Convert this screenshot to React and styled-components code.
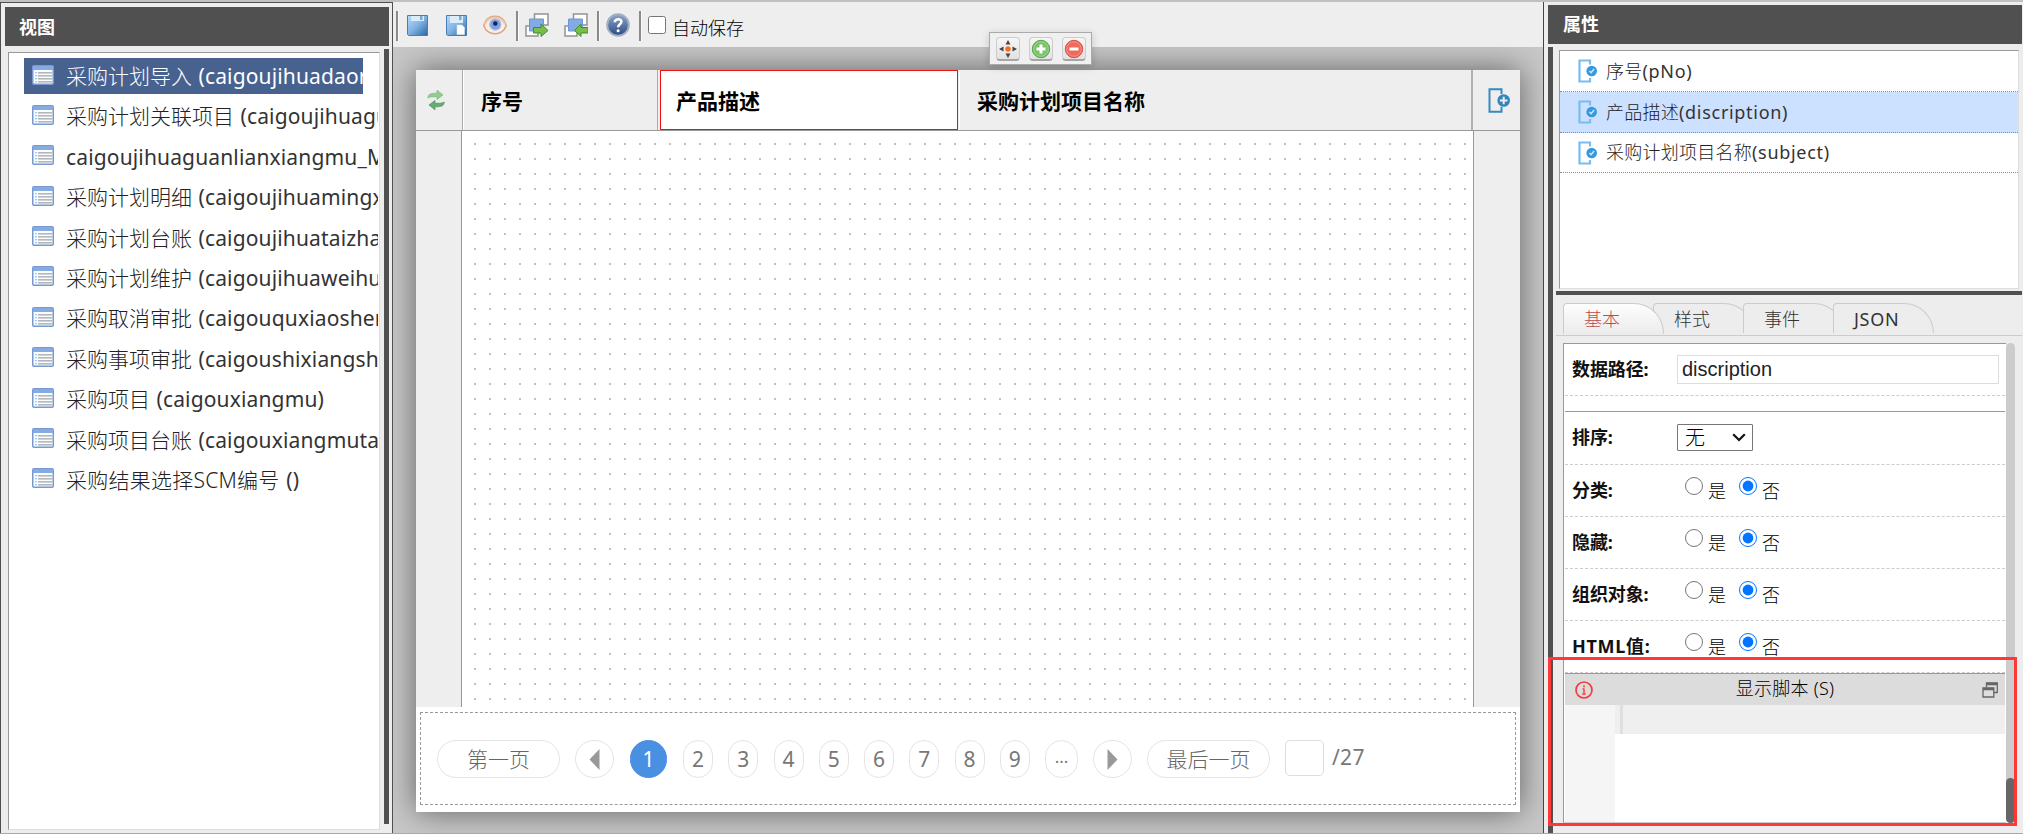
import React from "react";
import styled, { createGlobalStyle } from "styled-components";

const ui = `"Noto Sans", "Noto Sans CJK SC", sans-serif`;

const Global = createGlobalStyle`
  * { box-sizing: border-box; }
  body { margin: 0; overflow: hidden; font-family: ${ui}; background: #ededed; }
  svg { display: block; flex: none; }
`;

const Window = styled.div`
  position: relative;
  width: 2023px;
  height: 834px;
  display: flex;
  border-top: 2px solid #c0c0c0;
  border-bottom: 1px solid #a9a9a9;
  background: #ededed;
  overflow: hidden;
`;

/* ---------- left panel ---------- */
const ViewsPanel = styled.aside`
  width: 393px;
  flex: none;
  border: 1px solid #505050;
  border-bottom: 0;
  padding: 4px 3px 3px 4px;
  display: flex;
  flex-direction: column;
`;
const PanelTitle = styled.header`
  height: 39px;
  flex: none;
  padding-left: ${(p) => p.$inset}px;
  background: #505050;
  color: #fff;
  font: 700 18px/${(p) => p.$line}px ${ui};
`;
const ViewsBody = styled.div`
  flex: 1;
  min-height: 0;
  display: flex;
  justify-content: space-between;
  padding: 3px 0 0 3px;
`;
const ViewsList = styled.ul`
  width: 372px;
  height: 778px;
  margin: 3px 0 0;
  padding: 5px 1px 0 15px;
  list-style: none;
  background: #fff;
  border: 1px solid #ddd;
  border-top-color: #999;
  border-left-color: #999;
  overflow: hidden;
`;
const ViewItem = styled.li`
  height: 36px;
  margin-bottom: 4.4px;
  margin-right: ${(p) => (p.$active ? 15 : 0)}px;
  padding-left: 8px;
  display: flex;
  align-items: center;
  gap: 12px;
  overflow: hidden;
  background: ${(p) => (p.$active ? "#48628f" : "transparent")};
  color: ${(p) => (p.$active ? "#fff" : "#222")};
  font: 300 21px/36px ${ui};
  white-space: nowrap;
  word-spacing: 1px;
  svg { margin-top: -3px; }
`;
const ViewName = styled.span`
  letter-spacing: ${(p) => (p.$wide ? 0.25 : 0)}px;
`;
const ViewCode = styled.span`
  color: ${(p) => (p.$active ? "#fff" : "#333")};
  font-weight: 400;
  letter-spacing: 0.15px;
`;
const SideSplitter = styled.div`
  width: 5px;
  height: 775px;
  background: #505050;
`;

/* ---------- centre ---------- */
const Designer = styled.main`
  position: relative;
  width: 1150px;
  flex: none;
  display: flex;
  flex-direction: column;
`;
const Toolbar = styled.div`
  height: 45px;
  flex: none;
  display: flex;
  align-items: center;
  padding: 0 0 3px 3px;
  background: #eee;
`;
const Separator = styled.i`
  width: 3px;
  height: 30px;
  margin: 6px 0 0 ${(p) => p.$before || 0}px;
  border-left: 2px solid #8a8a8a;
  border-right: 1px solid #fafafa;
`;
const Tool = styled.span`
  margin: 4px 0 0 ${(p) => p.$gap}px;
  width: 24px;
  height: 24px;
`;
const AutoSave = styled.label`
  display: flex;
  align-items: center;
  margin-left: 6px;
  gap: 6px;
  font: 300 18px/24px ${ui};
  color: #000;
  span { margin-top: 9px; }
`;
const CheckBox = styled.input`
  width: 18px;
  height: 18px;
  margin: 3px 0 0;
`;
const Stage = styled.div`
  flex: 1;
  padding: 23px 23px 21px;
  background: #c8c8c8;
  overflow: hidden;
`;
const Sheet = styled.section`
  height: 742px;
  width: 1104px;
  display: flex;
  flex-direction: column;
  background: #fff;
  box-shadow: 0 0 30px rgba(0, 0, 0, 0.52);
`;
const GridHead = styled.div`
  height: 61px;
  flex: none;
  display: flex;
  background: #eee;
  border-bottom: 1px solid #999;
`;
const HeadTool = styled.div`
  width: ${(p) => p.$w}px;
  display: flex;
  align-items: center;
  padding-left: ${(p) => p.$pad}px;
  border-right: ${(p) => (p.$line ? "1px solid #aaa" : "0")};
`;
const HeadCell = styled.div`
  width: ${(p) => p.$w}px;
  margin-left: ${(p) => p.$gap}px;
  padding-left: ${(p) => p.$pad}px;
  border: ${(p) => (p.$selected ? "1px solid #f01010" : "0")};
  border-right: ${(p) => (p.$selected ? "1px solid #f01010" : p.$last ? "2px solid #b0b0b0" : "1px solid #aaa")};
  box-shadow: ${(p) => (p.$selected ? "none" : "-1px 0 0 #fff")};
  background: ${(p) => (p.$selected ? "#fff" : "#eee")};
  font: 700 21px/${(p) => (p.$selected ? 60 : 62)}px ${ui};
  color: #000;
`;
const GridBody = styled.div`
  height: 576px;
  flex: none;
  display: flex;
`;
const Gutter = styled.div`
  width: ${(p) => p.$w}px;
  background: #eee;
  border-left: ${(p) => (p.$right ? "1px solid #999" : "0")};
  border-right: ${(p) => (p.$right ? "0" : "1px solid #999")};
`;
const DropZone = styled.div`
  flex: 1;
  background: radial-gradient(circle at 8px 8px, #c2c2c2 0.8px, transparent 1.4px) 5px 5px / 15px 15px;
`;
const PagerBox = styled.nav`
  height: 93px;
  width: 1096px;
  margin: 5px 0 0 4px;
  border: 1px dashed #999;
  display: flex;
  align-items: center;
  padding: 1px 0 0 16px;
  font: 300 21px/36px ${ui};
  color: #777;
`;
const PageButton = styled.span`
  width: ${(p) => p.$w}px;
  height: 38px;
  margin-right: ${(p) => p.$gap || 15}px;
  flex: none;
  display: flex;
  justify-content: center;
  align-items: center;
  border: 1px solid ${(p) => (p.$active ? "#4a90e2" : "#e4e4e4")};
  border-radius: 19px;
  background: ${(p) => (p.$active ? "#4a90e2" : "#fff")};
  color: ${(p) => (p.$active ? "#fff" : p.$cjk ? "#666" : "#777")};
  font-weight: ${(p) => (p.$cjk ? 300 : 400)};
  font-size: ${(p) => (p.$dots ? 17 : 21)}px;
  padding-bottom: ${(p) => (p.$dots ? 4 : 0)}px;
`;
const PageInput = styled.input`
  width: 39px;
  height: 36px;
  margin: 0 8px 2px 0;
  border: 1px solid #ddd;
  border-radius: 5px;
  background: #fff;
`;
const PageTotal = styled.span`
  font-weight: 400;
  letter-spacing: 0.3px;
  margin-top: -4px;
`;
const CellTools = styled.div`
  position: absolute;
  left: 596px;
  top: 30px;
  width: 103px;
  height: 33px;
  display: flex;
  gap: 9px;
  padding: 4px 0 0 6px;
  background: #f0f0f0;
  border: 1px solid #aaa;
  box-shadow: 0 2px 8px rgba(0, 0, 0, 0.18);
`;
const CellTool = styled.span`
  width: 24px;
  height: 24px;
  display: flex;
  align-items: center;
  justify-content: center;
  border: 1px solid #ccc;
  border-bottom: 2px solid #a5a5a5;
  border-radius: 4px;
  background: linear-gradient(#f6f6f6, #e2e2e2);
`;

/* ---------- right panel ---------- */
const PropsPanel = styled.aside`
  width: 480px;
  flex: none;
  display: flex;
  flex-direction: column;
  border-left: 1px solid #444;
  padding: 3px 1px 0 4px;
`;
const PropsBody = styled.div`
  flex: 1;
  min-height: 0;
  margin-top: 3px;
  display: flex;
  border-left: 5px solid #505050;
`;
const PropsColumn = styled.div`
  flex: 1;
  margin-left: 3px;
  display: flex;
  flex-direction: column;
`;
const FieldList = styled.div`
  height: 239px;
  width: 460px;
  flex: none;
  margin: 3px 0 0 3px;
  background: #fff;
  border: 1px solid #ddd;
  border-top-color: #999;
  border-left-color: #999;
`;
const FieldRow = styled.div`
  height: ${(p) => p.$h}px;
  padding-left: 18px;
  display: flex;
  align-items: center;
  gap: 8px;
  border-bottom: 1px dotted #888;
  background: ${(p) => (p.$active ? "#cce0ff" : "#fff")};
  color: #222;
  font: 300 18px/38px ${ui};
  letter-spacing: 0.25px;
  span { margin-bottom: 1px; }
`;
const FieldCode = styled.span`
  color: #333;
  font-weight: 400;
  letter-spacing: 0.7px;
`;
const Splitter = styled.div`
  height: 4px;
  flex: none;
  margin-top: 2px;
  background: #505050;
`;
const Tabs = styled.div`
  height: 41px;
  flex: none;
  display: flex;
  padding: 8px 0 0 7px;
  border-bottom: 1px solid #ccc;
`;
const Tab = styled.div`
  position: relative;
  z-index: ${(p) => p.$z};
  width: 101px;
  height: ${(p) => (p.$active ? 31 : 30)}px;
  margin-right: -11px;
  padding-left: 20px;
  border: 1px solid #ccc;
  border-bottom: 0;
  border-radius: 4px 30px 0 0 / 4px 30px 0 0;
  background: ${(p) => (p.$active ? "linear-gradient(#fdfdfd, #ececec)" : "#ededed")};
  color: ${(p) => (p.$active ? "#c04a4a" : "#333")};
  font: ${(p) => (p.$latin ? 400 : 300)} 18px/31px ${ui};
  letter-spacing: ${(p) => (p.$latin ? 0.7 : 0)}px;
`;
const FormArea = styled.div`
  display: flex;
  margin: 7px 0 0 7px;
  height: 480px;
`;
const Form = styled.div`
  width: 443px;
  background: #fff;
  border-top: 1px solid #999;
  border-left: 1px solid #999;
  border-bottom: 1px solid #ccc;
  padding: 1px 1px 0;
  overflow: hidden;
`;
const FormRow = styled.div`
  height: ${(p) => p.$h || 52}px;
  display: flex;
  align-items: center;
  border-bottom: 1px dashed #ccc;
  padding: 0 0 0 7px;
`;
const FormLabel = styled.div`
  width: 105px;
  margin-bottom: 2px;
  font: 700 18px/26px ${ui};
  letter-spacing: ${(p) => (p.$wide ? 0.7 : -0.1)}px;
  color: #111;
`;
const Divider = styled.hr`
  margin: 15px 0 0;
  border: 0;
  height: 1px;
  background: #999;
`;
const TextField = styled.input`
  width: 322px;
  height: 29px;
  margin: 0 0 2px;
  padding: 0 4px;
  border: 1px solid #ddd;
  outline: 0;
  color: #222;
  font: 20px "Liberation Sans", sans-serif;
`;
const SelectBox = styled.div`
  width: 76px;
  height: 27px;
  margin-bottom: 1px;
  padding: 0 6px 0 7px;
  display: flex;
  align-items: center;
  justify-content: space-between;
  border: 1px solid #767676;
  border-radius: 1px;
  font: 300 20px/27px ${ui};
`;
const Choice = styled.label`
  display: flex;
  align-items: center;
  margin-left: ${(p) => p.$gap}px;
  gap: 5px;
  font: 300 18px/26px ${ui};
  input {
    width: 18px;
    height: 18px;
    margin: 0 0 9px;
    accent-color: #0075ff;
  }
`;
const ScriptHead = styled.div`
  height: 32px;
  display: flex;
  align-items: center;
  justify-content: space-between;
  padding: 0 7px 0 10px;
  background: #dcdcdc;
  border-top: 1px solid #999;
  font: 300 18px/29px ${ui};
  span { margin: 0 5px 2px 0; letter-spacing: 0.25px; }
`;
const ScriptEditor = styled.div`
  height: 130px;
  display: flex;
`;
const LineGutter = styled.div`
  width: 50px;
  background: #f5f5f5;
`;
const ActiveLine = styled.div`
  flex: 1;
  height: 29px;
  padding-left: 5px;
  background: #efefef;
`;
const Caret = styled.div`
  width: 3px;
  height: 29px;
  background: #dfdfdf;
`;
const ScrollTrack = styled.div`
  width: 9px;
  display: flex;
  align-items: flex-end;
  background: #ccc;
  border-radius: 5px;
`;
const ScrollThumb = styled.div`
  width: 9px;
  height: 45px;
  border-radius: 5px;
  background: #666;
`;
const Highlight = styled.div`
  position: absolute;
  left: 1548px;
  top: 655px;
  width: 469px;
  height: 169px;
  border: 3px solid #ff3737;
  z-index: 20;
`;

/* ---------- icons ---------- */
const ListIcon = () => (
  <svg width="22" height="20" viewBox="0 0 22 20">
    <rect x=".75" y=".75" width="20.5" height="18.5" rx="1.2" fill="#fbfcfe" stroke="#7599d0" strokeWidth="1.5" />
    <rect x="1" y="1" width="20" height="4" fill="#86abe2" />
    <g fill="#9ccbf5">{[7, 10, 13, 16].map((y) => <rect key={y} x="3" y={y} width="2" height="1.3" />)}</g>
    <g fill="#b4b8bc">{[7, 10, 13, 16].map((y) => <rect key={y} x="6" y={y} width="14" height="1.6" />)}</g>
  </svg>
);
const SaveIcon = ({ page }) => (
  <svg width="24" height="24" viewBox="0 0 24 24">
    <defs>
      <linearGradient id="disk" x1="0" y1="0" x2="1" y2="1">
        <stop offset="0" stopColor="#b9dcf8" /><stop offset=".5" stopColor="#7fb2e3" /><stop offset="1" stopColor="#2b659f" />
      </linearGradient>
    </defs>
    <path d="M1.500 2.500h20v20h-19l-1-1z" fill="url(#disk)" stroke="#477fb5" />
    <path d={page ? "M5 3h13v7H5z" : "M5 3h13v5H5z"} fill="#dcebf8" />
    <path d="M14 3h2.500v4H14z" fill="#77a9d9" />
    {page && <path d="M12 12h5l2.500 2.500v7H12z" fill="#fff" stroke="#dbe6f0" strokeWidth=".6" />}
  </svg>
);
const EyeIcon = () => (
  <svg width="24" height="24" viewBox="0 0 24 24">
    <path d="M.8 12.500C3 5 8 3.300 12 3.300s9 1.700 11.200 9.200C21 19 16 20.700 12 20.700S3 19 .8 12.500z" fill="#fbeee4" stroke="#dfa47e" strokeWidth="1.5" />
    <path d="M2 11C5 5.500 8.500 4.500 12 4.500s7 1 10 6.500" fill="none" stroke="#efc9ae" strokeWidth="2" />
    <circle cx="12.300" cy="11.500" r="6" fill="#7da0e0" />
    <circle cx="12.300" cy="11.500" r="5.500" fill="none" stroke="#b4c9f3" />
    <circle cx="12.300" cy="10.500" r="2.200" fill="#152550" />
  </svg>
);
const TransferIcon = ({ back }) => (
  <svg width="24" height="24" viewBox="0 0 24 24">
    <path d="M9.500 1h13.500v11H9.500zM1 13h12v10H1z" fill="#fff" stroke="#929292" strokeWidth="1.500" />
    <path d="M4.500 6h14v12h-14z" fill="#82abe6" stroke="#6e96d0" />
    {back
      ? <path d="M24 14.500h-7v-3.500L10.500 17.500l6.500 6V20h7z" fill="#76bd49" stroke="#3f8c2c" />
      : <path d="M8.500 14.500H16V11l7 6.500-7 6V20H8.500z" fill="#76bd49" stroke="#3f8c2c" />}
  </svg>
);
const HelpIcon = () => (
  <svg width="24" height="24" viewBox="0 0 24 24">
    <defs>
      <linearGradient id="ball" x1="0" y1="0" x2="0" y2="1"><stop offset="0" stopColor="#8da6cb" /><stop offset="1" stopColor="#2a4b83" /></linearGradient>
    </defs>
    <circle cx="12" cy="12" r="10.800" fill="url(#ball)" stroke="#a3afc2" strokeWidth="2" />
    <path d="M8.800 9.300c0-4 6.600-4.200 6.600-.6 0 2.700-3.300 2.500-3.300 5.600" fill="none" stroke="#fff" strokeWidth="2.500" />
    <circle cx="12.100" cy="17.800" r="1.500" fill="#fff" />
  </svg>
);
const SwapIcon = () => (
  <svg width="18" height="22" viewBox="0 0 18 22">
    <path d="M.8 9C1.500 5 3 4.200 10 4.200V1.200L16 6l-6 4.500V7.700C5 7.700 3.500 7.500 .8 9z" fill="#93cc90" stroke="#79b978" strokeWidth=".7" />
    <path d="M17.300 13c-.7 4-2.300 4.800-9.300 4.800v3L2 16l6-4.500v2.800c5 0 6.500.200 9.300-1.300z" fill="#68ae70" stroke="#488f55" strokeWidth=".7" />
  </svg>
);
const ColumnAddIcon = () => (
  <svg width="23" height="25" viewBox="0 0 23 25">
    <path d="M13.500 6V1.300H1.500v22.400h12V19" fill="none" stroke="#3689c1" strokeWidth="2" />
    <circle cx="15.700" cy="12.500" r="6.300" fill="#3185bf" />
    <path d="M15.700 8.700v7.600M11.900 12.500h7.600" stroke="#eee" strokeWidth="2" />
  </svg>
);
const ColumnIcon = () => (
  <svg width="20" height="24" viewBox="0 0 20 24">
    <path d="M12 5.500V1.500H1.500v21H12V19" fill="none" stroke="#79bdf0" strokeWidth="2.200" />
    <circle cx="13.700" cy="12" r="5.300" fill="#3599df" />
    <path d="M11.500 12l1.600 1.700 3-3.600" fill="none" stroke="#cfe8fb" strokeWidth="1.500" />
  </svg>
);
const MoveIcon = () => (
  <svg width="20" height="20" viewBox="0 0 20 20">
    <path d="M10 1l2.500 4.500h-5zM10 19l2.500-4.500h-5zM1 10l4.500-2.500v5zM19 10l-4.500-2.500v5z" fill="#4b4540" />
    <circle cx="10" cy="10" r="2.700" fill="#ff6a1f" />
  </svg>
);
const RoundIcon = ({ add }) => (
  <svg width="20" height="20" viewBox="0 0 20 20">
    <circle cx="10" cy="10" r="8.700" fill={add ? "#79c26a" : "#ee6a5f"} stroke={add ? "#57a34e" : "#d94f48"} />
    <circle cx="10" cy="10" r="7.300" fill="none" stroke={add ? "#a5dc99" : "#f89a90"} strokeWidth=".8" />
    <path d={add ? "M10 5.500v9M5.500 10h9" : "M5.500 10h9"} stroke="#fff" strokeWidth="3" />
  </svg>
);
const Arrow = ({ next }) => (
  <svg width="11" height="21" viewBox="0 0 11 21">
    <path d={next ? "M.5 0L10.500 10.500.5 21z" : "M10.500 0L.5 10.500l10 10.500z"} fill="#999" />
  </svg>
);
const Chevron = () => (
  <svg width="14" height="9" viewBox="0 0 14 9"><path d="M1.200 1.200L7 7l5.800-5.800" fill="none" stroke="#111" strokeWidth="2.200" /></svg>
);
const InfoIcon = () => (
  <svg width="18" height="18" viewBox="0 0 18 18">
    <circle cx="9" cy="9" r="8" fill="none" stroke="#f43c3c" strokeWidth="1.700" />
    <path d="M9 7.500V13M7.500 8H9M7.300 13h3.400M9 4.300v1.900" stroke="#f55" strokeWidth="1.800" fill="none" />
  </svg>
);
const WindowsIcon = () => (
  <svg width="16" height="16" viewBox="0 0 16 16">
    <path d="M4.500 5V1h10.800v9.500H12" fill="none" stroke="#666" strokeWidth="1.300" />
    <path d="M4 2h11.500" stroke="#666" strokeWidth="2.500" />
    <path d="M1 6h10.800v9H1z" fill="#ddd" stroke="#666" strokeWidth="1.300" />
    <path d="M1 7h11" stroke="#666" strokeWidth="2.500" />
  </svg>
);

/* ---------- data ---------- */
const views = [
  ["采购计划导入 ", "(caigoujihuadaoru)"],
  ["采购计划关联项目 ", "(caigoujihuaguanlianxiangmu)"],
  ["", "caigoujihuaguanlianxiangmu_MX"],
  ["采购计划明细 ", "(caigoujihuamingxi)"],
  ["采购计划台账 ", "(caigoujihuataizhang)"],
  ["采购计划维护 ", "(caigoujihuaweihu)"],
  ["采购取消审批 ", "(caigouquxiaoshenpi)"],
  ["采购事项审批 ", "(caigoushixiangshenpi)"],
  ["采购项目 ", "(caigouxiangmu)"],
  ["采购项目台账 ", "(caigouxiangmutaizhang)"],
  ["采购结果选择SCM编号 ", "()"],
];
const fields = [
  ["序号", "(pNo)", 41],
  ["产品描述", "(discription)", 41],
  ["采购计划项目名称", "(subject)", 40],
];
const switches = ["分类:", "隐藏:", "组织对象:", "HTML值:"];

export default function App() {
  return (
    <>
      <Global />
      <Window>
        <ViewsPanel>
          <PanelTitle $inset={14} $line={41}>视图</PanelTitle>
          <ViewsBody>
            <ViewsList>
              {views.map(([name, code], i) => (
                <ViewItem key={i} $active={i === 0}>
                  <ListIcon />
                  <span>
                    <ViewName $wide={name.includes("SCM")}>{name}</ViewName>
                    <ViewCode $active={i === 0}>{code}</ViewCode>
                  </span>
                </ViewItem>
              ))}
            </ViewsList>
            <SideSplitter />
          </ViewsBody>
        </ViewsPanel>

        <Designer>
          <Toolbar>
            <Separator />
            <Tool $gap={7}><SaveIcon /></Tool>
            <Tool $gap={15}><SaveIcon page /></Tool>
            <Tool $gap={14}><EyeIcon /></Tool>
            <Separator $before={9} />
            <Tool $gap={6}><TransferIcon /></Tool>
            <Tool $gap={15}><TransferIcon back /></Tool>
            <Separator $before={9} />
            <Tool $gap={6}><HelpIcon /></Tool>
            <Separator $before={9} />
            <AutoSave><CheckBox type="checkbox" /><span>自动保存</span></AutoSave>
          </Toolbar>
          <Stage>
            <Sheet>
              <GridHead>
                <HeadTool $w={47} $pad={11} $line><SwapIcon /></HeadTool>
                <HeadCell $w={194} $gap={1} $pad={17}>序号</HeadCell>
                <HeadCell $w={298} $gap={2} $pad={15} $selected>产品描述</HeadCell>
                <HeadCell $w={513} $gap={2} $pad={17} $last>采购计划项目名称</HeadCell>
                <HeadTool $w={47} $pad={15}><ColumnAddIcon /></HeadTool>
              </GridHead>
              <GridBody>
                <Gutter $w={46} />
                <DropZone />
                <Gutter $w={47} $right />
              </GridBody>
              <PagerBox>
                <PageButton $w={123} $cjk>第一页</PageButton>
                <PageButton $w={39} $gap={16}><Arrow /></PageButton>
                <PageButton $w={37} $gap={16} $active>1</PageButton>
                {[2, 3, 4, 5, 6, 7, 8, 9].map((n) => (
                  <PageButton key={n} $w={30} $gap={15.25}>{n}</PageButton>
                ))}
                <PageButton $w={33} $dots>...</PageButton>
                <PageButton $w={39}><Arrow next /></PageButton>
                <PageButton $w={123} $cjk>最后一页</PageButton>
                <PageInput />
                <PageTotal>/27</PageTotal>
              </PagerBox>
            </Sheet>
          </Stage>
          <CellTools>
            <CellTool><MoveIcon /></CellTool>
            <CellTool><RoundIcon add /></CellTool>
            <CellTool><RoundIcon /></CellTool>
          </CellTools>
        </Designer>

        <PropsPanel>
          <PanelTitle $inset={15} $line={39}>属性</PanelTitle>
          <PropsBody>
            <PropsColumn>
              <FieldList>
                {fields.map(([name, code, h], i) => (
                  <FieldRow key={name} $h={h} $active={i === 1}>
                    <ColumnIcon />
                    <span>{name}<FieldCode>{code}</FieldCode></span>
                  </FieldRow>
                ))}
              </FieldList>
              <Splitter />
              <Tabs>
                <Tab $active $z={4}>基本</Tab>
                <Tab $z={1}>样式</Tab>
                <Tab $z={2}>事件</Tab>
                <Tab $z={3} $latin>JSON</Tab>
              </Tabs>
              <FormArea>
                <Form>
                  <FormRow $h={51}>
                    <FormLabel>数据路径:</FormLabel>
                    <TextField defaultValue="discription" />
                  </FormRow>
                  <Divider />
                  <FormRow $h={53}>
                    <FormLabel>排序:</FormLabel>
                    <SelectBox>无<Chevron /></SelectBox>
                  </FormRow>
                  {switches.map((label) => (
                    <FormRow key={label}>
                      <FormLabel $wide={label.startsWith("HTML")}>{label}</FormLabel>
                      <Choice $gap={8}><input type="radio" name={label} />是</Choice>
                      <Choice $gap={13}><input type="radio" name={label} defaultChecked />否</Choice>
                    </FormRow>
                  ))}
                  <ScriptHead><InfoIcon /><span>显示脚本 (S)</span><WindowsIcon /></ScriptHead>
                  <ScriptEditor>
                    <LineGutter />
                    <ActiveLine><Caret /></ActiveLine>
                  </ScriptEditor>
                </Form>
                <ScrollTrack><ScrollThumb /></ScrollTrack>
              </FormArea>
            </PropsColumn>
          </PropsBody>
        </PropsPanel>
        <Highlight />
      </Window>
    </>
  );
}
